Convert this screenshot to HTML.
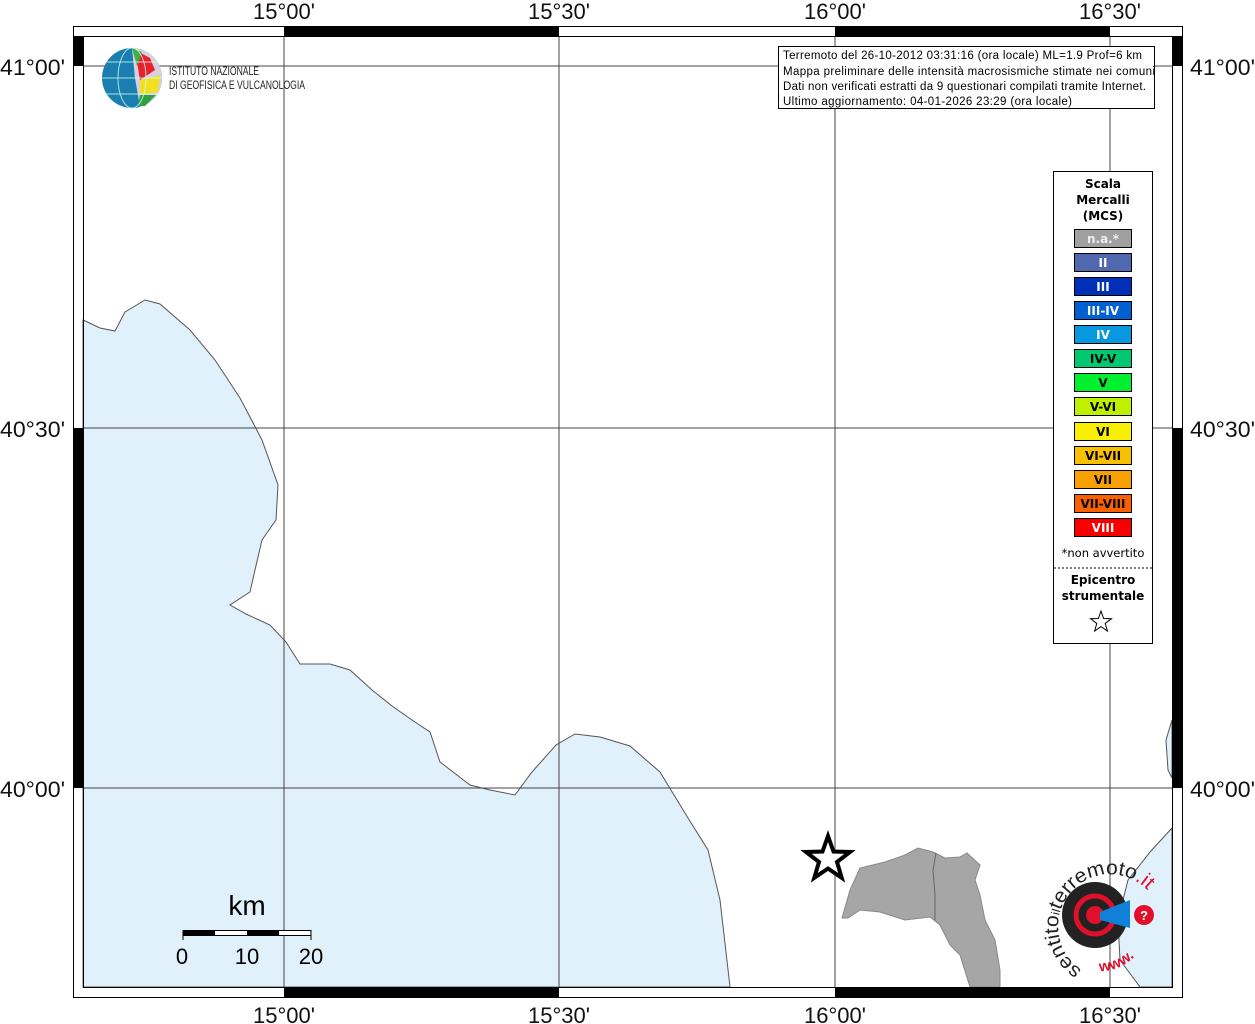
<!DOCTYPE html>
<html><head><meta charset="utf-8"><style>
html,body{margin:0;padding:0;background:#fff;}
svg{display:block;font-family:"Liberation Sans",sans-serif;}
</style></head><body>
<svg width="1255" height="1024" viewBox="0 0 1255 1024" xmlns="http://www.w3.org/2000/svg">
<rect width="1255" height="1024" fill="#fff"/>
<path d="M83,320 L100,328 L115,331 L125,312 L145,300 L160,304 L190,330 L215,360 L240,398 L262,440 L278,485 L276,520 L262,540 L255,570 L250,592 L230,605 L246,614 L270,625 L286,642 L300,664 L330,664 L350,670 L372,690 L392,706 L412,720 L430,732 L440,762 L470,785 L490,790 L515,795 L532,772 L556,745 L575,734 L600,737 L630,746 L660,772 L688,818 L708,850 L720,900 L730,987 L83,987 Z" fill="#e0f1fc" stroke="#555" stroke-width="1"/>
<path d="M1172,828 L1150,852 L1128,880 L1118,920 L1120,960 L1140,987 L1172,987 Z" fill="#e0f1fc" stroke="#555" stroke-width="1"/>
<path d="M1172,720 L1166,740 L1168,770 L1172,778 Z" fill="#e0f1fc" stroke="#555" stroke-width="1"/>
<path d="M842,918 L850,890 L860,868 L885,862 L905,855 L918,848 L933,852 L945,858 L960,857 L967,853 L980,865 L975,880 L980,895 L985,920 L995,940 L1000,970 L1000,987 L970,987 L960,955 L950,945 L940,925 L930,917 L905,920 L880,912 L860,910 L848,918 Z" fill="#a6a6a6" stroke="#888" stroke-width="1"/>
<path d="M936,853 L933,870 L935,895 L935,920" fill="none" stroke="#666" stroke-width="1"/>
<g stroke="#444" stroke-width="1" fill="none">
<line x1="284" y1="36" x2="284" y2="987"/><line x1="559" y1="36" x2="559" y2="987"/>
<line x1="835" y1="36" x2="835" y2="987"/><line x1="1110" y1="36" x2="1110" y2="987"/>
<line x1="83" y1="66" x2="1172" y2="66"/><line x1="83" y1="428" x2="1172" y2="428"/>
<line x1="83" y1="788" x2="1172" y2="788"/>
</g>
<rect x="73.5" y="26.5" width="1109" height="971" fill="none" stroke="#000"/>
<rect x="83.5" y="36.5" width="1089" height="951" fill="none" stroke="#000"/>
<g fill="#000">
<rect x="284" y="26" width="275" height="10"/><rect x="835" y="26" width="275" height="10"/>
<rect x="284" y="987" width="275" height="10"/><rect x="835" y="987" width="275" height="10"/>
<rect x="73" y="36" width="10" height="30"/><rect x="73" y="428" width="10" height="360"/>
<rect x="1172" y="36" width="10" height="30"/><rect x="1172" y="428" width="10" height="360"/>
</g>
<g font-size="22" fill="#111" text-anchor="middle">
<text x="284" y="19">15°00'</text><text x="559" y="19">15°30'</text><text x="835" y="19">16°00'</text><text x="1110" y="19">16°30'</text>
<text x="284" y="1023">15°00'</text><text x="559" y="1023">15°30'</text><text x="835" y="1023">16°00'</text><text x="1110" y="1023">16°30'</text>
</g>
<g font-size="22" fill="#111">
<text x="0" y="75" textLength="65" lengthAdjust="spacingAndGlyphs">41°00'</text><text x="0" y="437" textLength="65" lengthAdjust="spacingAndGlyphs">40°30'</text><text x="0" y="797" textLength="65" lengthAdjust="spacingAndGlyphs">40°00'</text>
<text x="1190" y="75" textLength="65" lengthAdjust="spacingAndGlyphs">41°00'</text><text x="1190" y="437" textLength="65" lengthAdjust="spacingAndGlyphs">40°30'</text><text x="1190" y="797" textLength="65" lengthAdjust="spacingAndGlyphs">40°00'</text>
</g>
<circle cx="132" cy="78" r="30" fill="#1a7fb0"/>
<path d="M132,48 A30,30 0 0,1 162,78 A30,30 0 0,1 140,107 L135,78 Z" fill="#d8d0e0"/>
<path d="M135,50 L150,58 L155,70 L140,80 Z" fill="#e8202c"/>
<path d="M140,80 L160,75 L158,92 L140,95 Z" fill="#f0e020"/>
<path d="M140,95 L156,95 L145,106 L138,106 Z" fill="#30a040"/>
<path d="M132,48 L142,52 L137,66 Z" fill="#40b040"/>
<g stroke="#cfe" stroke-width="1" fill="none" opacity="0.8"><ellipse cx="132" cy="78" rx="14" ry="30"/><path d="M102,78 H162 M106,62 H158 M106,94 H158"/></g>
<text x="169" y="75" font-size="12" fill="#222" textLength="90" lengthAdjust="spacingAndGlyphs">ISTITUTO NAZIONALE</text>
<text x="169" y="89" font-size="12" fill="#222" textLength="136" lengthAdjust="spacingAndGlyphs">DI GEOFISICA E VULCANOLOGIA</text>
<rect x="778.5" y="46.5" width="376" height="62" fill="#fff" stroke="#000"/>
<g font-size="11.5" fill="#000" lengthAdjust="spacingAndGlyphs">
<text x="783" y="59" textLength="359">Terremoto del 26-10-2012 03:31:16 (ora locale) ML=1.9 Prof=6 km</text>
<text x="783" y="75" textLength="372">Mappa preliminare delle intensità macrosismiche stimate nei comuni</text>
<text x="783" y="90" textLength="363">Dati non verificati estratti da 9 questionari compilati tramite Internet.</text>
<text x="783" y="105" textLength="289">Ultimo aggiornamento: 04-01-2026 23:29 (ora locale)</text>
</g>
<rect x="1053.5" y="171.5" width="99" height="472" fill="#fff" stroke="#000"/>
<g font-family="DejaVu Sans, sans-serif" font-weight="bold" font-size="12" text-anchor="middle" fill="#000">
<text x="1103" y="188">Scala</text><text x="1103" y="204">Mercalli</text><text x="1103" y="220">(MCS)</text>
</g>
<g stroke="#000">
<rect x="1074.5" y="229.5" width="57" height="18" fill="#a0a0a0"/>
<rect x="1074.5" y="253.5" width="57" height="18" fill="#5068b0"/>
<rect x="1074.5" y="277.5" width="57" height="18" fill="#0030b8"/>
<rect x="1074.5" y="301.5" width="57" height="18" fill="#0060d0"/>
<rect x="1074.5" y="325.5" width="57" height="18" fill="#0898e0"/>
<rect x="1074.5" y="349.5" width="57" height="18" fill="#00c870"/>
<rect x="1074.5" y="373.5" width="57" height="18" fill="#00f030"/>
<rect x="1074.5" y="397.5" width="57" height="18" fill="#c0f000"/>
<rect x="1074.5" y="422.5" width="57" height="18" fill="#f8f000"/>
<rect x="1074.5" y="446.5" width="57" height="18" fill="#f8c000"/>
<rect x="1074.5" y="470.5" width="57" height="18" fill="#f8a000"/>
<rect x="1074.5" y="494.5" width="57" height="18" fill="#f86000"/>
<rect x="1074.5" y="518.5" width="57" height="18" fill="#f80000"/>
</g>
<g font-family="DejaVu Sans, sans-serif" font-weight="bold" font-size="12" text-anchor="middle">
<text x="1103" y="243" fill="#eee">n.a.*</text>
<text x="1103" y="267" fill="#fff">II</text>
<text x="1103" y="291" fill="#fff">III</text>
<text x="1103" y="315" fill="#fff">III-IV</text>
<text x="1103" y="339" fill="#fff">IV</text>
<text x="1103" y="363" fill="#000">IV-V</text>
<text x="1103" y="387" fill="#000">V</text>
<text x="1103" y="411" fill="#000">V-VI</text>
<text x="1103" y="436" fill="#000">VI</text>
<text x="1103" y="460" fill="#000">VI-VII</text>
<text x="1103" y="484" fill="#000">VII</text>
<text x="1103" y="508" fill="#000">VII-VIII</text>
<text x="1103" y="532" fill="#fff">VIII</text>
</g>
<text x="1103" y="557" font-family="DejaVu Sans, sans-serif" font-size="11.5" text-anchor="middle">*non avvertito</text>
<line x1="1054" y1="568" x2="1152" y2="568" stroke="#000" stroke-dasharray="2,2"/>
<g font-family="DejaVu Sans, sans-serif" font-weight="bold" font-size="12" text-anchor="middle"><text x="1103" y="584">Epicentro</text><text x="1103" y="600">strumentale</text></g>
<path d="M1101,611 L1103.6,618.5 L1111.5,618.7 L1105.2,623.5 L1107.4,631 L1101,626.6 L1094.6,631 L1096.8,623.5 L1090.5,618.7 L1098.4,618.5 Z" fill="#fff" stroke="#000" stroke-width="1"/>
<path d="M828,836 L833.5,851.5 L850,852 L837,862 L841.7,877.8 L828,868.5 L814.3,877.8 L819,862 L806,852 L822.5,851.5 Z" fill="#fff" stroke="#000" stroke-width="4" stroke-linejoin="miter"/>
<text x="247" y="915" font-size="28" text-anchor="middle">km</text>
<rect x="183" y="930.5" width="128" height="5" fill="#fff" stroke="#000"/>
<rect x="183" y="930.5" width="32" height="5" fill="#000"/><rect x="247" y="930.5" width="32" height="5" fill="#000"/>
<line x1="183" y1="930" x2="183" y2="940" stroke="#000"/><line x1="311" y1="930" x2="311" y2="940" stroke="#000"/>
<g font-size="22" text-anchor="middle"><text x="182" y="964">0</text><text x="247" y="964">10</text><text x="311" y="964">20</text></g>
<circle cx="1095" cy="915" r="33" fill="#222"/>
<circle cx="1095" cy="915" r="19" fill="none" stroke="#e0102a" stroke-width="5"/>
<circle cx="1095" cy="915" r="9" fill="#e0102a"/>
<path d="M1100,912 L1130,900 L1130,928 L1100,920 Z" fill="#1080d8"/>
<circle cx="1144" cy="915" r="10" fill="#e0102a"/>
<text x="1144" y="920" font-size="13" font-weight="bold" fill="#fff" text-anchor="middle">?</text>
<defs><path id="arc" d="M1082,970 A52,52 0 1,1 1155,900"/><path id="arc2" d="M1080,968 A52,52 0 0,0 1148,935"/></defs>
<text font-size="20" fill="#222"><textPath href="#arc" textLength="175" lengthAdjust="spacingAndGlyphs">sentito<tspan font-size="12">il</tspan>terremoto<tspan fill="#e0102a">.it</tspan></textPath></text>
<text font-size="15" fill="#e0102a" font-weight="bold"><textPath href="#arc2" startOffset="20">www.</textPath></text>
</svg>
</body></html>
